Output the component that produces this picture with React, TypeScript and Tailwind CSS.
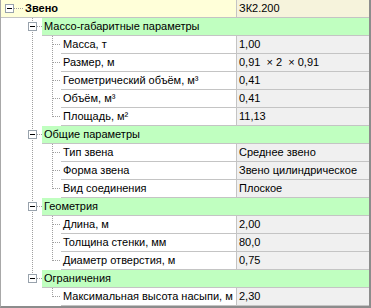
import React from "react";

type Item = { name: string; value?: string; children?: Item[] };

const groups: Item[] = [
  {
    name: "Массо-габаритные параметры",
    children: [
      { name: "Масса, т", value: "1,00" },
      { name: "Размер, м", value: "0,91  × 2  × 0,91" },
      { name: "Геометрический объём, м³", value: "0,41" },
      { name: "Объём, м³", value: "0,41" },
      { name: "Площадь, м²", value: "11,13" },
    ],
  },
  {
    name: "Общие параметры",
    children: [
      { name: "Тип звена", value: "Среднее звено" },
      { name: "Форма звена", value: "Звено цилиндрическое" },
      { name: "Вид соединения", value: "Плоское" },
    ],
  },
  {
    name: "Геометрия",
    children: [
      { name: "Длина, м", value: "2,00" },
      { name: "Толщина стенки, мм", value: "80,0" },
      { name: "Диаметр отверстия, м", value: "0,75" },
    ],
  },
  {
    name: "Ограничения",
    children: [{ name: "Максимальная высота насыпи, м", value: "2,30" }],
  },
];

const LINE = "#a0a0a0";

// little expander box with a minus sign
function MinusBox({ x }: { x: number }) {
  return (
    <g shapeRendering="crispEdges">
      <rect x={x + 0.5} y={4.5} width={8} height={8} fill="#fff" stroke="#98a2ac" />
      <line x1={x + 2} y1={8.5} x2={x + 7} y2={8.5} stroke="#000" />
    </g>
  );
}

function Dots({ x1, y1, x2, y2 }: { x1: number; y1: number; x2: number; y2: number }) {
  return (
    <line
      x1={x1}
      y1={y1}
      x2={x2}
      y2={y2}
      stroke={LINE}
      strokeDasharray="1 1"
      shapeRendering="crispEdges"
    />
  );
}

function RootRow() {
  return (
    <div className="flex h-[18px] border-b border-[#c4c4c4] bg-[#ffffd9]">
      <svg width={23} height={17} className="shrink-0">
        <MinusBox x={4} />
        <Dots x1={13} y1={8.5} x2={23} y2={8.5} />
      </svg>
      <div className="flex w-[212px] items-center pl-px font-bold">Звено</div>
      <div className="flex flex-1 items-center border-l border-[#c4c4c4] bg-[#f6f3dc] pl-[2px]">
        ЗК2.200
      </div>
    </div>
  );
}

function GroupRow({ name, last }: { name: string; last: boolean }) {
  return (
    <div className="flex h-[18px]">
      <svg width={41} height={18} className="shrink-0">
        <Dots x1={31.5} y1={0} x2={31.5} y2={last ? 5 : 18} />
        <MinusBox x={27} />
        <Dots x1={36} y1={8.5} x2={41} y2={8.5} />
      </svg>
      <div className="flex flex-1 items-center border-b border-[#c4c4c4] bg-[#c0ffc0] pl-[2px]">
        {name}
      </div>
    </div>
  );
}

function LeafRow({
  item,
  last,
  parentLast,
}: {
  item: Item;
  last: boolean;
  parentLast: boolean;
}) {
  return (
    <div className="flex h-[18px]">
      <svg width={60} height={18} className="shrink-0">
        {!parentLast && <Dots x1={31.5} y1={0} x2={31.5} y2={18} />}
        <Dots x1={51.5} y1={0} x2={51.5} y2={last ? 9 : 18} />
        <Dots x1={52} y1={8.5} x2={60} y2={8.5} />
      </svg>
      <div className="flex w-[175px] items-center whitespace-nowrap border-b border-[#c4c4c4] bg-white pl-[2px]">
        {item.name}
      </div>
      <div className="flex flex-1 items-center whitespace-pre border-b border-l border-[#c4c4c4] bg-[#f0f0f0] pl-[2px]">
        {item.value}
      </div>
    </div>
  );
}

export default function App() {
  return (
    <div
      className="h-[308px] w-[371px] overflow-hidden border-b-2 border-l border-r-2 border-b-[#8c8c8c] border-l-[#a8a8a8] border-r-[#8c8c8c] bg-white text-[11px] leading-none text-black"
      style={{ fontFamily: '"Liberation Sans", Arial, sans-serif' }}
    >
      <RootRow />
      {groups.map((g, gi) => {
        const gLast = gi === groups.length - 1;
        return (
          <React.Fragment key={g.name}>
            <GroupRow name={g.name} last={gLast} />
            {g.children?.map((c, ci) => (
              <LeafRow
                key={c.name}
                item={c}
                last={ci === (g.children?.length ?? 0) - 1}
                parentLast={gLast}
              />
            ))}
          </React.Fragment>
        );
      })}
    </div>
  );
}
